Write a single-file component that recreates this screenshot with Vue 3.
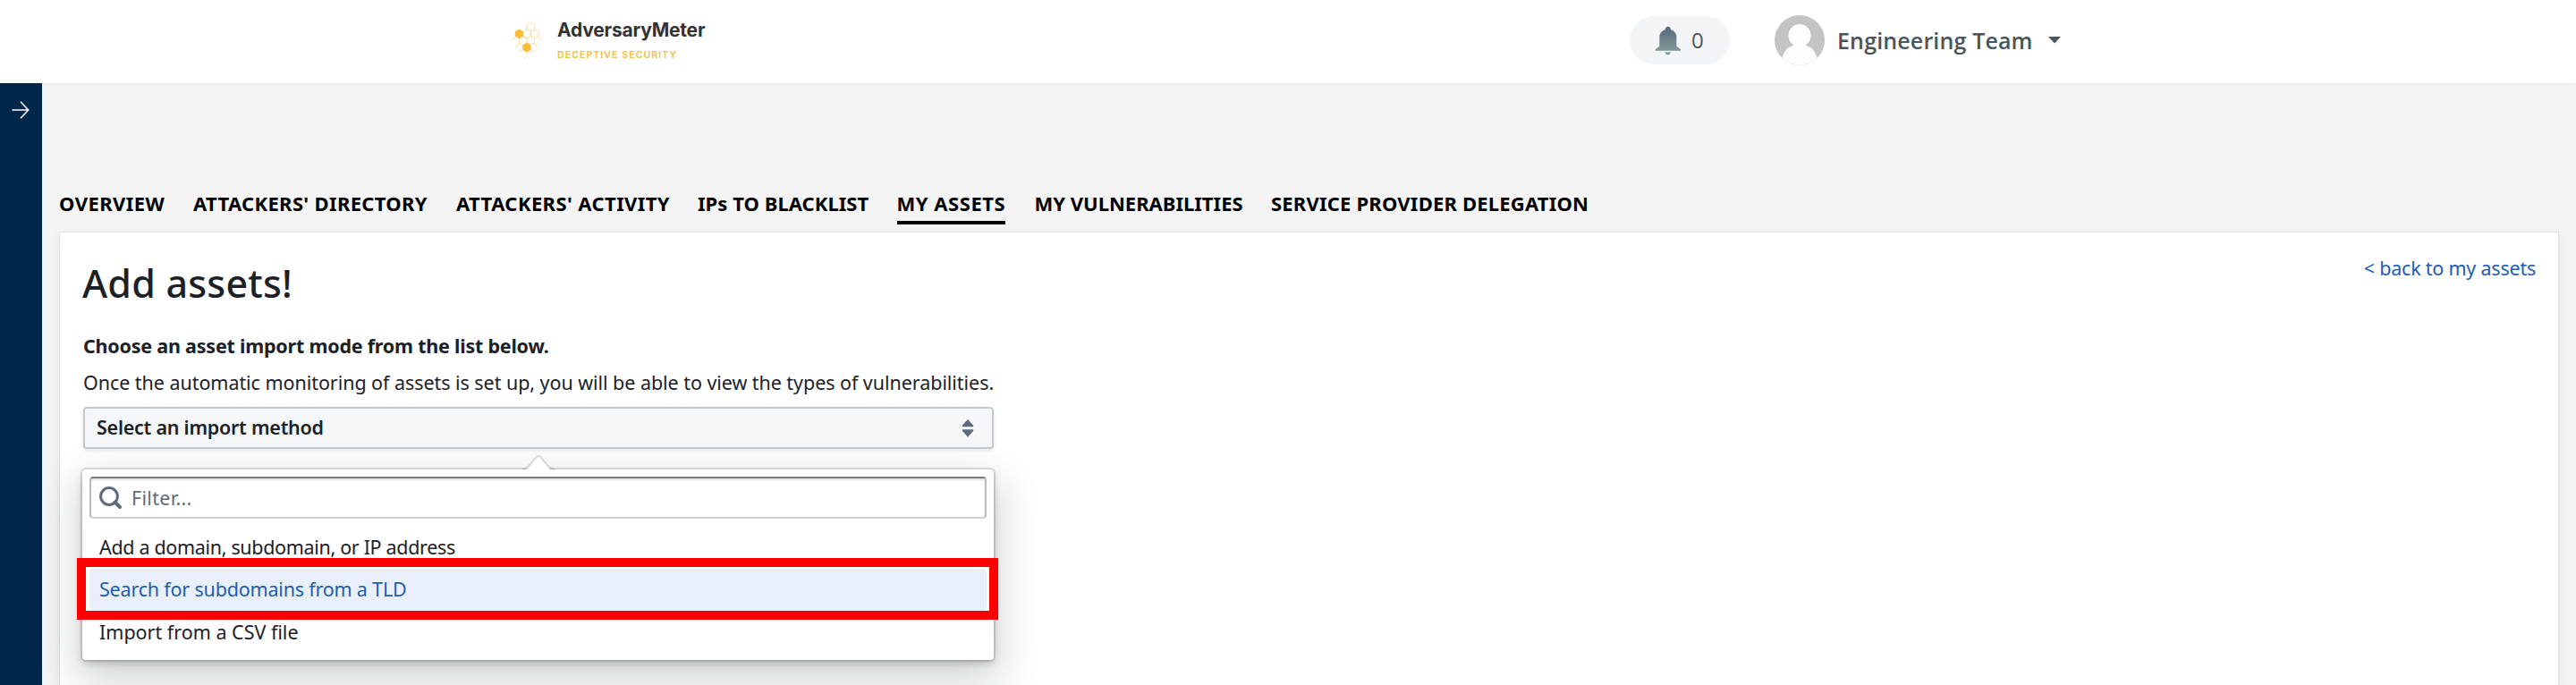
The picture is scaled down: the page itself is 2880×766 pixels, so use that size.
<script setup>
import { ref } from 'vue'

const tabs = [
  'OVERVIEW',
  "ATTACKERS' DIRECTORY",
  "ATTACKERS' ACTIVITY",
  'IPs TO BLACKLIST',
  'MY ASSETS',
  'MY VULNERABILITIES',
  'SERVICE PROVIDER DELEGATION',
]
const activeTab = ref('MY ASSETS')

const methods = [
  'Add a domain, subdomain, or IP address',
  'Search for subdomains from a TLD',
  'Import from a CSV file',
]
const highlighted = ref(1)

const outlineCells = [[85, 31], [72, 53.5], [98, 53.5], [59, 76], [85, 76]]
const filledCells = [[46, 53.5], [72, 99.5]]
const hex = ([x, y], r) =>
  [[0, -1], [0.866, -0.5], [0.866, 0.5], [0, 1], [-0.866, 0.5], [-0.866, -0.5]]
    .map(([a, b]) => `${x + a * r},${y + b * r}`)
    .join(' ')
</script>

<template>
  <div class="page">
    <header class="topbar">
      <div class="brand">
        <svg class="hive" viewBox="0 0 150 150">
          <g fill="none" stroke="#fbdc9b" stroke-width="2.8">
            <polygon v-for="c in outlineCells" :key="c.join()" :points="hex(c, 15)" />
            <path d="M33 61V67L21 73M111 61V67L123 73M98 84V91L110 97M46 84V91L34 97M59 106L46 113M85 106L98 113M72 114V125Q71 132 60 137" />
          </g>
          <polygon v-for="c in filledCells" :key="c.join()" :points="hex(c, 16)" fill="#f9bc3c" />
        </svg>
        <div class="wordmark">
          <span class="name">AdversaryMeter</span>
          <span class="tagline">DECEPTIVE SECURITY</span>
        </div>
      </div>
      <div class="alerts">
        <svg class="bell" viewBox="28 40 90 98">
          <defs>
            <linearGradient id="bellFill" x1="0" y1="0" x2="0" y2="1">
              <stop offset="0" stop-color="#56677a" />
              <stop offset="1" stop-color="#809a9c" />
            </linearGradient>
          </defs>
          <path fill="url(#bellFill)" d="M63 52C63 38 82 38 82 52C93 55 101 64 101 76V107L115 118V123H30V118L44 107V76C44 64 52 55 63 52Z" />
          <path fill="#84a0a4" d="M62 127H82Q80 136 72 137Q64 136 62 127Z" />
        </svg>
        <span>0</span>
      </div>
      <div class="account">
        <svg class="avatar" viewBox="0 0 168 168">
          <defs><clipPath id="avatarClip"><circle cx="84" cy="84" r="84" /></clipPath></defs>
          <g clip-path="url(#avatarClip)">
            <rect width="168" height="168" fill="#c4c4c4" />
            <g fill="#fdfdfd">
              <ellipse cx="84" cy="68" rx="37.5" ry="38" />
              <path d="M64 93Q66 99 60 102C42 108 30 124 25 144V168H143V144C138 124 126 108 108 102Q102 99 104 93Z" />
            </g>
          </g>
        </svg>
        <span class="who">Engineering Team</span>
        <svg class="caret" viewBox="0 0 14 8"><path d="M0 0H14L7 7.5Z" fill="#4a555c" /></svg>
      </div>
    </header>

    <div class="body">
      <aside class="rail">
        <svg class="arrow" viewBox="0 0 20 20">
          <path d="M0.5 10H18.5M10 0.8L18.7 10L10 19.2" fill="none" stroke="#fff" stroke-width="1.5" />
        </svg>
      </aside>
      <main class="main">
        <nav class="tabs">
          <a v-for="t in tabs" :key="t" class="tab" :class="{ active: t === activeTab }">{{ t }}</a>
        </nav>
        <section class="card">
          <div class="form">
            <h1>Add assets!</h1>
            <p class="lead">Choose an asset import mode from the list below.</p>
            <p class="hint">Once the automatic monitoring of assets is set up, you will be able to view the types of vulnerabilities.</p>
            <div class="select">
              <span class="value">Select an import method</span>
              <svg class="sorter" viewBox="0 0 14 20">
                <path d="M7 0L13 6.5Q14 8.2 12.5 8.2H1.5Q0 8.2 1 6.5ZM7 19.8L13 13Q14 11.3 12.5 11.3H1.5Q0 11.3 1 13Z" fill="#5f6b7c" />
              </svg>
              <div class="menu">
                <svg class="tip" viewBox="0 0 36 18">
                  <path d="M0 18C4 18 5 16.5 7 14.5L15 4.2Q18 1 21 4.2L29 14.5C31 16.5 32 18 36 18Z" fill="#fff" />
                  <path d="M0 16.5C4 16.5 5 15.5 7 13.5L15 3.6Q18 .6 21 3.6L29 13.5C31 15.5 32 16.5 36 16.5" fill="none" stroke="#111418" stroke-opacity=".14" stroke-width="2" />
                </svg>
                <div class="filter">
                  <svg class="lens" viewBox="0 0 25 25">
                    <circle cx="11" cy="11" r="9.4" fill="none" stroke="#5f6b7c" stroke-width="3" />
                    <path d="M17.5 17.5L23 23" stroke="#5f6b7c" stroke-width="4" stroke-linecap="round" />
                  </svg>
                  <span>Filter...</span>
                </div>
                <ul>
                  <li v-for="(m, i) in methods" :key="m" :class="{ on: i === highlighted }">
                    <span>{{ m }}</span>
                    <i v-if="i === highlighted" class="marker"></i>
                  </li>
                </ul>
              </div>
            </div>
          </div>
          <a class="back">&lt; back to my assets</a>
        </section>
      </main>
    </div>
  </div>
</template>

<style>
body {
  margin: 0;
}
</style>

<style scoped>
.page {
  display: flex;
  flex-direction: column;
  width: 2880px;
  height: 766px;
  overflow: hidden;
  background: #f4f4f4;
  color: #1c2127;
  font: 21.5px/30px "Noto Sans", "Open Sans", sans-serif;
}
.topbar {
  display: flex;
  flex: none;
  box-sizing: border-box;
  height: 93px;
  padding-left: 565px;
  background: #fff;
  box-shadow: 0 1px 4px rgba(0, 0, 0, 0.06);
  position: relative;
}
.brand {
  display: flex;
  width: 1257px;
  padding-top: 20px;
}
.hive {
  width: 50px;
  height: 50px;
}
.wordmark {
  display: flex;
  flex-direction: column;
  margin-left: 8px;
  padding-top: 1px;
  font-family: Inter, sans-serif;
}
.name {
  font-size: 21px;
  font-weight: 700;
  line-height: 26px;
  letter-spacing: -0.2px;
  color: #333;
}
.tagline {
  margin-top: 8px;
  font-size: 10.5px;
  font-weight: 600;
  line-height: 14px;
  letter-spacing: 1.1px;
  color: #f5bd45;
}
.alerts {
  display: flex;
  align-items: center;
  box-sizing: border-box;
  width: 112px;
  height: 54px;
  margin-top: 18px;
  padding-left: 28px;
  border-radius: 27px;
  background: #f3f5f7;
  color: #4d565c;
  font: 500 24px/30px "Open Sans", sans-serif;
}
.bell {
  width: 30px;
  height: 33px;
  margin-right: 11px;
}
.account {
  display: flex;
  align-items: center;
  height: 56px;
  margin: 17px 0 0 50px;
  color: #4a545b;
}
.avatar {
  width: 56px;
  height: 56px;
}
.who {
  margin-left: 14px;
  width: 236px;
  font: 600 25px/34px "Open Sans", sans-serif;
  letter-spacing: 0.15px;
  white-space: nowrap;
}
.caret {
  width: 14px;
  height: 8px;
}
.body {
  display: flex;
  flex: 1;
  min-height: 0;
}
.rail {
  flex: none;
  width: 47px;
  box-sizing: border-box;
  padding: 20px 0 0 13px;
  background: #00264a;
  position: relative;
}
.arrow {
  display: block;
  width: 20px;
  height: 20px;
}
.main {
  display: flex;
  flex-direction: column;
  flex: 1;
  padding: 119px 19px 0;
}
.tabs {
  display: grid;
  grid-template-columns: 150px 294px 270px 222.5px 154px 264.5px auto;
  justify-items: start;
  justify-content: start;
}
.tab {
  font-size: 22px;
  font-weight: 700;
  line-height: 31px;
  padding-bottom: 4px;
  border-bottom: 4px solid transparent;
  color: #000;
  white-space: nowrap;
}
.tab.active {
  border-color: #000;
}
.tab:nth-child(1) { letter-spacing: 0.45px; }
.tab:nth-child(2) { letter-spacing: 0.33px; }
.tab:nth-child(3) { letter-spacing: 0.4px; }
.tab:nth-child(4) { letter-spacing: 0.05px; }
.tab:nth-child(5) { letter-spacing: 0.54px; }
.tab:nth-child(6) { letter-spacing: 0; }
.tab:nth-child(7) { letter-spacing: 0.2px; }
.card {
  display: flex;
  justify-content: space-between;
  align-items: flex-start;
  flex: 1;
  box-sizing: border-box;
  width: 2795px;
  margin-top: 8px;
  padding: 24px 25px 0 26px;
  border: 1px solid #dcdfe3;
  border-bottom: 0;
  background: #fff;
  box-shadow: 0 4px 12px rgba(30, 40, 70, 0.06);
}
.form {
  width: 1018px;
}
h1 {
  margin: 3px 0 0 -1px;
  font-size: 43px;
  font-weight: 500;
  line-height: 60px;
  letter-spacing: 0.2px;
}
p {
  margin: 0;
  white-space: nowrap;
}
.lead {
  margin-top: 25px;
  font-weight: 700;
  letter-spacing: -0.22px;
}
.hint {
  margin-top: 11px;
  letter-spacing: -0.05px;
}
.back {
  margin-top: 1px;
  color: #215db0;
  letter-spacing: -0.22px;
}
.select {
  position: relative;
  display: flex;
  align-items: center;
  justify-content: space-between;
  box-sizing: border-box;
  height: 47px;
  margin-top: 12px;
  padding: 0 20px 0 13px;
  border: 2px solid #c6c9cc;
  border-radius: 4px;
  background: #f6f7f9;
  box-shadow: 0 2px 4px rgba(17, 20, 24, 0.1);
  font-weight: 600;
  letter-spacing: -0.25px;
}
.value {
  margin-bottom: 2px;
}
.sorter {
  width: 14px;
  height: 20px;
}
.menu {
  position: absolute;
  top: 68px;
  left: -3px;
  box-sizing: border-box;
  width: 1019px;
  height: 213px;
  padding: 8px;
  border-radius: 4px;
  background: #fff;
  box-shadow: 0 0 0 2px rgba(17, 20, 24, 0.12), 0 4px 8px rgba(17, 20, 24, 0.2), 0 18px 46px 6px rgba(17, 20, 24, 0.18);
  font-weight: 400;
}
.tip {
  position: absolute;
  top: -17px;
  left: 492px;
  width: 36px;
  height: 18px;
}
.filter {
  display: flex;
  align-items: center;
  box-sizing: border-box;
  height: 47px;
  padding-left: 9px;
  border: 2px solid #cdcecf;
  border-color: #77797c #b9bbbd #cdcecf;
  border-radius: 4px;
  box-shadow: inset 0 2px 2px rgba(17, 20, 24, 0.12);
  color: #5f6b7c;
  letter-spacing: 0.3px;
}
.lens {
  width: 25px;
  height: 25px;
  margin-right: 11px;
}
ul {
  display: grid;
  gap: 0.5px;
  margin: 8.5px 0 0;
  padding: 0;
  list-style: none;
}
li {
  position: relative;
  height: 47px;
  padding-left: 11px;
  border-radius: 4px;
  line-height: 46px;
}
li:nth-child(1) { letter-spacing: -0.33px; }
li:nth-child(2) { letter-spacing: -0.19px; }
li:nth-child(3) { letter-spacing: 0; }
li.on {
  background: #e9f0fb;
  color: #215db0;
}
.marker {
  position: absolute;
  top: -12px;
  left: -14px;
  right: -13px;
  height: 49px;
  border: 10px solid #f00;
}
</style>
